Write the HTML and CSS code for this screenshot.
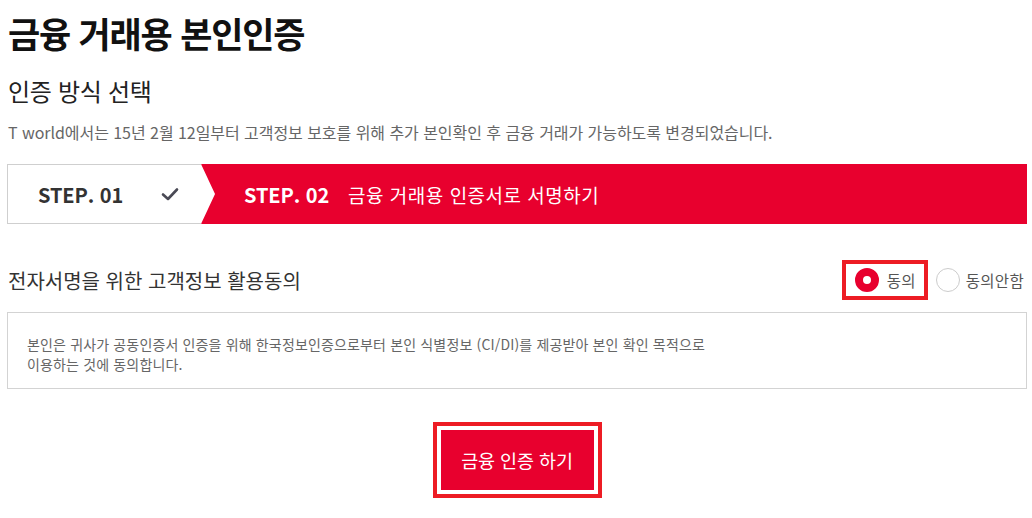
FILE: index.html
```html
<!DOCTYPE html>
<html lang="ko">
<head>
    <meta charset="UTF-8">
    <meta name="viewport" content="width=device-width, initial-scale=1.0">
    <title>금융 거래용 본인인증</title>
    <link rel="stylesheet" href="styles.css">
</head>
<body>
    <div class="page">
        <h1>금융 거래용 본인인증</h1>
        <h2>인증 방식 선택</h2>
        <p class="desc">T world에서는 15년 2월 12일부터 고객정보 보호를 위해 추가 본인확인 후 금융 거래가 가능하도록 변경되었습니다.</p>

        <div class="steps">
            <div class="step step-done">
                <span class="step-num">STEP. 01</span>
                <svg class="check" width="18" height="14" viewBox="0 0 18 14">
                    <path d="M2 7.5 L7 12 L16 2.5" fill="none" stroke="#4a4a55" stroke-width="2.6" stroke-linecap="round" stroke-linejoin="round"/>
                </svg>
            </div>
            <div class="step step-current">
                <span class="step-num">STEP. 02</span>
                <span class="step-title">금융 거래용 인증서로 서명하기</span>
            </div>
        </div>

        <div class="agree-row">
            <span class="agree-label">전자서명을 위한 고객정보 활용동의</span>
            <div class="radios">
                <label class="radio radio-on highlight">
                    <span class="dot"></span>동의
                </label>
                <label class="radio">
                    <span class="dot"></span>동의안함
                </label>
            </div>
        </div>

        <div class="terms">
            본인은 귀사가 공동인증서 인증을 위해 한국정보인증으로부터 본인 식별정보 (CI/DI)를 제공받아 본인 확인 목적으로<br>
            이용하는 것에 동의합니다.
        </div>

        <div class="actions">
            <div class="highlight btn-wrap">
                <button class="btn-primary">금융 인증 하기</button>
            </div>
        </div>
    </div>
</body>
</html>
```

FILE: styles.css
```css
body {
    margin: 0;
    padding: 0;
    background-color: #fff;
    font-family: "Noto Sans CJK KR", "Noto Sans", sans-serif;
    color: #222;
}

.page {
    width: 1020px;
    padding: 0 5px 0 7px;
}

h1 {
    margin: 13px 0 0 1px;
    font-size: 35px;
    line-height: 40px;
    font-weight: bold;
    letter-spacing: -1.2px;
    color: #111;
}

h2 {
    margin: 23px 0 0 1px;
    font-size: 24px;
    line-height: 30px;
    font-weight: normal;
    letter-spacing: -0.3px;
    color: #222;
}

.desc {
    margin: 16px 0 0 1px;
    font-size: 16px;
    line-height: 20px;
    letter-spacing: -0.05px;
    color: #666;
}

.steps {
    display: flex;
    height: 60px;
    margin-top: 22px;
    background-color: #e8002e;
}

.step {
    display: flex;
    align-items: center;
    box-sizing: border-box;
}

.step-done {
    flex: 0 0 208px;
    padding-left: 30px;
    background-color: #fff;
    border: 1px solid #cfcfcf;
    border-right: 0;
    clip-path: polygon(0 0, 194px 0, 208px 50%, 194px 100%, 0 100%);
}

.step-num {
    font-size: 20px;
    font-weight: bold;
    letter-spacing: -0.1px;
}

.step-done .step-num {
    color: #333;
}

.check {
    margin-left: 38px;
}

.step-current {
    padding-left: 29px;
    color: #fff;
}

.step-title {
    margin-left: 19px;
    font-size: 19px;
    letter-spacing: 0.5px;
}

.agree-row {
    display: flex;
    align-items: center;
    justify-content: space-between;
    height: 40px;
    margin-top: 36px;
}

.agree-label {
    margin-left: 1px;
    font-size: 20px;
    color: #333;
}

.radios {
    display: flex;
    align-items: center;
    margin-right: 3px;
}

.radio {
    display: flex;
    align-items: center;
    gap: 6px;
    font-size: 15.5px;
    color: #555;
    letter-spacing: 0.3px;
}

.radio .dot {
    width: 24px;
    height: 24px;
    box-sizing: border-box;
    border-radius: 50%;
    border: 1px solid #ccc;
    background-color: #fff;
}

.radio-on .dot {
    border: 8px solid #e8002e;
}

.highlight {
    border: 4px solid #ed1c24;
}

.radio-on {
    box-sizing: border-box;
    height: 40px;
    gap: 8px;
    padding: 0 8px 0 9px;
    margin-right: 8px;
}

.terms {
    box-sizing: border-box;
    height: 77px;
    margin-top: 12px;
    padding: 21px 19px 0;
    border: 1px solid #d3d3d3;
    font-size: 14px;
    line-height: 20px;
    letter-spacing: 0.15px;
    color: #666;
}

.actions {
    display: flex;
    justify-content: center;
    margin-top: 33px;
}

.btn-wrap {
    padding: 4px;
}

.btn-primary {
    display: block;
    width: 153px;
    height: 60px;
    border: none;
    background-color: #e8002e;
    color: #fff;
    font-family: inherit;
    font-size: 18.5px;
    letter-spacing: -0.1px;
    cursor: pointer;
}
```
